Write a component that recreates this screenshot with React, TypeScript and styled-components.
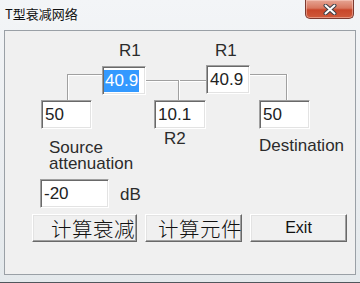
import styled, { createGlobalStyle } from "styled-components";

const GlobalStyle = createGlobalStyle`
  html, body {
    margin: 0;
    padding: 0;
  }
  body {
    background: #e9edf1;
    font-family: "Liberation Sans", Arial, sans-serif;
  }
`;

interface BoxNode {
  id: string;
  x: number;
  y: number;
  w: number;
  value: string;
  selected?: boolean;
}

interface LabelNode {
  id: string;
  x: number;
  y: number;
  text: string;
}

interface WireNode {
  id: string;
  x: number;
  y: number;
  w: number;
  h: number;
  sides: string;
}

const boxes: BoxNode[] = [
  { id: "r1a", x: 97, y: 35, w: 44, value: "40.9", selected: true },
  { id: "r1b", x: 201, y: 34, w: 44, value: "40.9" },
  { id: "src", x: 36, y: 69, w: 51, value: "50" },
  { id: "r2", x: 149, y: 69, w: 52, value: "10.1" },
  { id: "dst", x: 254, y: 69, w: 51, value: "50" },
];

const labels: LabelNode[] = [
  { id: "l1", x: 114, y: 12, text: "R1" },
  { id: "l2", x: 210, y: 12, text: "R1" },
  { id: "l3", x: 159, y: 100, text: "R2" },
  { id: "l4", x: 44, y: 109, text: "Source\nattenuation" },
  { id: "l5", x: 254, y: 107, text: "Destination" },
];

const wires: WireNode[] = [
  { id: "w1", x: 62, y: 43, w: 36, h: 26, sides: "tl" },
  { id: "w2", x: 244, y: 43, w: 38, h: 26, sides: "tr" },
  { id: "w3", x: 140, y: 49, w: 62, h: 2, sides: "t" },
  { id: "w4", x: 173, y: 49, w: 2, h: 20, sides: "l" },
];

const App = () => {
  return (
    <>
      <GlobalStyle />
      <Window>
        <TitleBar>
          <Title>T型衰减网络</Title>
          <CloseButton>
            <svg width="14" height="11" viewBox="0 0 14 11">
              <path
                d="M2.5 1.5 L11.5 9.5 M11.5 1.5 L2.5 9.5"
                stroke="#3b3f47"
                strokeWidth="4"
                strokeLinecap="round"
              />
              <path
                d="M2.5 1.5 L11.5 9.5 M11.5 1.5 L2.5 9.5"
                stroke="#ffffff"
                strokeWidth="2"
                strokeLinecap="round"
              />
            </svg>
          </CloseButton>
        </TitleBar>
        <Client>
          <Diagram>
            {wires.map((w) => (
              <Wire
                key={w.id}
                $x={w.x}
                $y={w.y}
                $w={w.w}
                $h={w.h}
                $sides={w.sides}
              />
            ))}
            {labels.map((l) => (
              <Label key={l.id} $x={l.x} $y={l.y}>
                {l.text}
              </Label>
            ))}
            {boxes.map((b) => (
              <NodeBox key={b.id} $x={b.x} $y={b.y} $w={b.w}>
                {b.selected ? <Selection>{b.value}</Selection> : b.value}
              </NodeBox>
            ))}
          </Diagram>
          <AttenRow>
            <Field $w={69}>-20</Field>
            <Unit>dB</Unit>
          </AttenRow>
          <ButtonRow>
            <PushButton $w={105} $pad={18} $cjk>
              计算衰减
            </PushButton>
            <PushButton $w={97} $pad={12} $cjk>
              计算元件
            </PushButton>
            <PushButton $w={97}>Exit</PushButton>
          </ButtonRow>
        </Client>
      </Window>
    </>
  );
};

export default App;

const Window = styled.div`
  width: 360px;
  height: 283px;
  box-sizing: border-box;
  display: flex;
  flex-direction: column;
  background: linear-gradient(180deg, #f3f5f7 0%, #eaedf0 60%, #e4e9ec 100%);
  border-bottom: 1px solid #50565c;
`;

const TitleBar = styled.div`
  height: 30px;
  display: flex;
  justify-content: space-between;
  align-items: flex-start;
  padding-left: 5px;
`;

const Title = styled.div`
  margin-top: 5px;
  font-family: "Noto Sans CJK SC", "Liberation Sans", sans-serif;
  font-size: 13px;
  line-height: 18px;
  color: #111;
  text-shadow: 0 0 6px rgba(255, 255, 255, 0.9);
`;

const CloseButton = styled.div`
  width: 49px;
  height: 19px;
  margin-right: 6px;
  box-sizing: border-box;
  display: flex;
  align-items: center;
  justify-content: center;
  border: 1px solid #7c3a30;
  border-top: none;
  border-radius: 0 0 5px 5px;
  background: linear-gradient(180deg, #e6a594 0%, #d8775f 45%, #c8462a 55%, #cf5a3b 100%);
  box-shadow: inset 0 0 0 1px rgba(255, 220, 210, 0.45);
`;

const Client = styled.div`
  margin: 0 4px 0 4px;
  height: 245px;
  box-sizing: border-box;
  border: 1px solid #9aa0a6;
  background: #f0f0f0;
  display: flex;
  flex-direction: column;
`;

const Diagram = styled.div`
  position: relative;
  height: 148px;
  flex-shrink: 0;
`;

const Wire = styled.div<{
  $x: number;
  $y: number;
  $w: number;
  $h: number;
  $sides: string;
}>`
  position: absolute;
  left: ${(p) => p.$x}px;
  top: ${(p) => p.$y}px;
  width: ${(p) => p.$w}px;
  height: ${(p) => p.$h}px;
  box-sizing: border-box;
  border-top: ${(p) => (p.$sides.includes("t") ? "1px solid #a0a0a0" : "none")};
  border-left: ${(p) => (p.$sides.includes("l") ? "1px solid #a0a0a0" : "none")};
  border-right: ${(p) => (p.$sides.includes("r") ? "1px solid #a0a0a0" : "none")};
  box-shadow: ${(p) =>
    [
      p.$sides.includes("t") ? "inset 0 1px 0 #ffffff" : "",
      p.$sides.includes("l") ? "inset 1px 0 0 #ffffff" : "",
      p.$sides.includes("r") ? "1px 0 0 #ffffff" : "",
    ]
      .filter(Boolean)
      .join(", ") || "none"};
`;

const Label = styled.div<{ $x: number; $y: number }>`
  position: absolute;
  left: ${(p) => p.$x}px;
  top: ${(p) => p.$y}px;
  font-size: 17px;
  line-height: 16px;
  color: #2b2b2b;
  white-space: pre-line;
`;

const sunken = `
  box-sizing: border-box;
  height: 29px;
  background: #ffffff;
  border-style: solid;
  border-width: 1px;
  border-color: #a0a0a0 #ffffff #ffffff #a0a0a0;
  box-shadow: inset 1px 1px 0 #696969, inset -1px -1px 0 #e3e3e3;
  padding-left: 3px;
  display: flex;
  align-items: center;
  font-size: 17px;
  color: #222;
  white-space: nowrap;
  overflow: hidden;
`;

const NodeBox = styled.div<{ $x: number; $y: number; $w: number }>`
  ${sunken}
  position: absolute;
  left: ${(p) => p.$x}px;
  top: ${(p) => p.$y}px;
  width: ${(p) => p.$w}px;
`;

const Selection = styled.span`
  display: inline-block;
  margin-left: -2px;
  padding: 0 1px;
  line-height: 22px;
  background: #3399ff;
  color: #ffffff;
`;

const AttenRow = styled.div`
  display: flex;
  align-items: center;
  gap: 11px;
  padding-left: 35px;
`;

const Field = styled.div<{ $w: number }>`
  ${sunken}
  width: ${(p) => p.$w}px;
`;

const Unit = styled.span`
  font-size: 17px;
  line-height: 20px;
  margin-top: 3px;
  color: #2b2b2b;
`;

const ButtonRow = styled.div`
  display: flex;
  gap: 8px;
  margin-top: 6px;
  padding-left: 27px;
`;

const PushButton = styled.div<{ $w: number; $pad?: number; $cjk?: boolean }>`
  box-sizing: border-box;
  width: ${(p) => p.$w}px;
  height: 28px;
  display: flex;
  align-items: center;
  justify-content: ${(p) => (p.$cjk ? "flex-start" : "center")};
  padding-left: ${(p) => p.$pad ?? 0}px;
  overflow: hidden;
  white-space: nowrap;
  background: #f0f0f0;
  border-style: solid;
  border-width: 1px;
  border-color: #ffffff #696969 #696969 #ffffff;
  box-shadow: inset -1px -1px 0 #a0a0a0, inset 1px 1px 0 #e3e3e3;
  font-family: ${(p) =>
    p.$cjk
      ? `"Noto Sans CJK SC", "Liberation Sans", sans-serif`
      : `"Liberation Sans", Arial, sans-serif`};
  font-size: ${(p) => (p.$cjk ? "20.5px" : "16px")};
  letter-spacing: ${(p) => (p.$cjk ? "0.5px" : "0")};
  font-weight: ${(p) => (p.$cjk ? 300 : 400)};
  color: #111;
`;
